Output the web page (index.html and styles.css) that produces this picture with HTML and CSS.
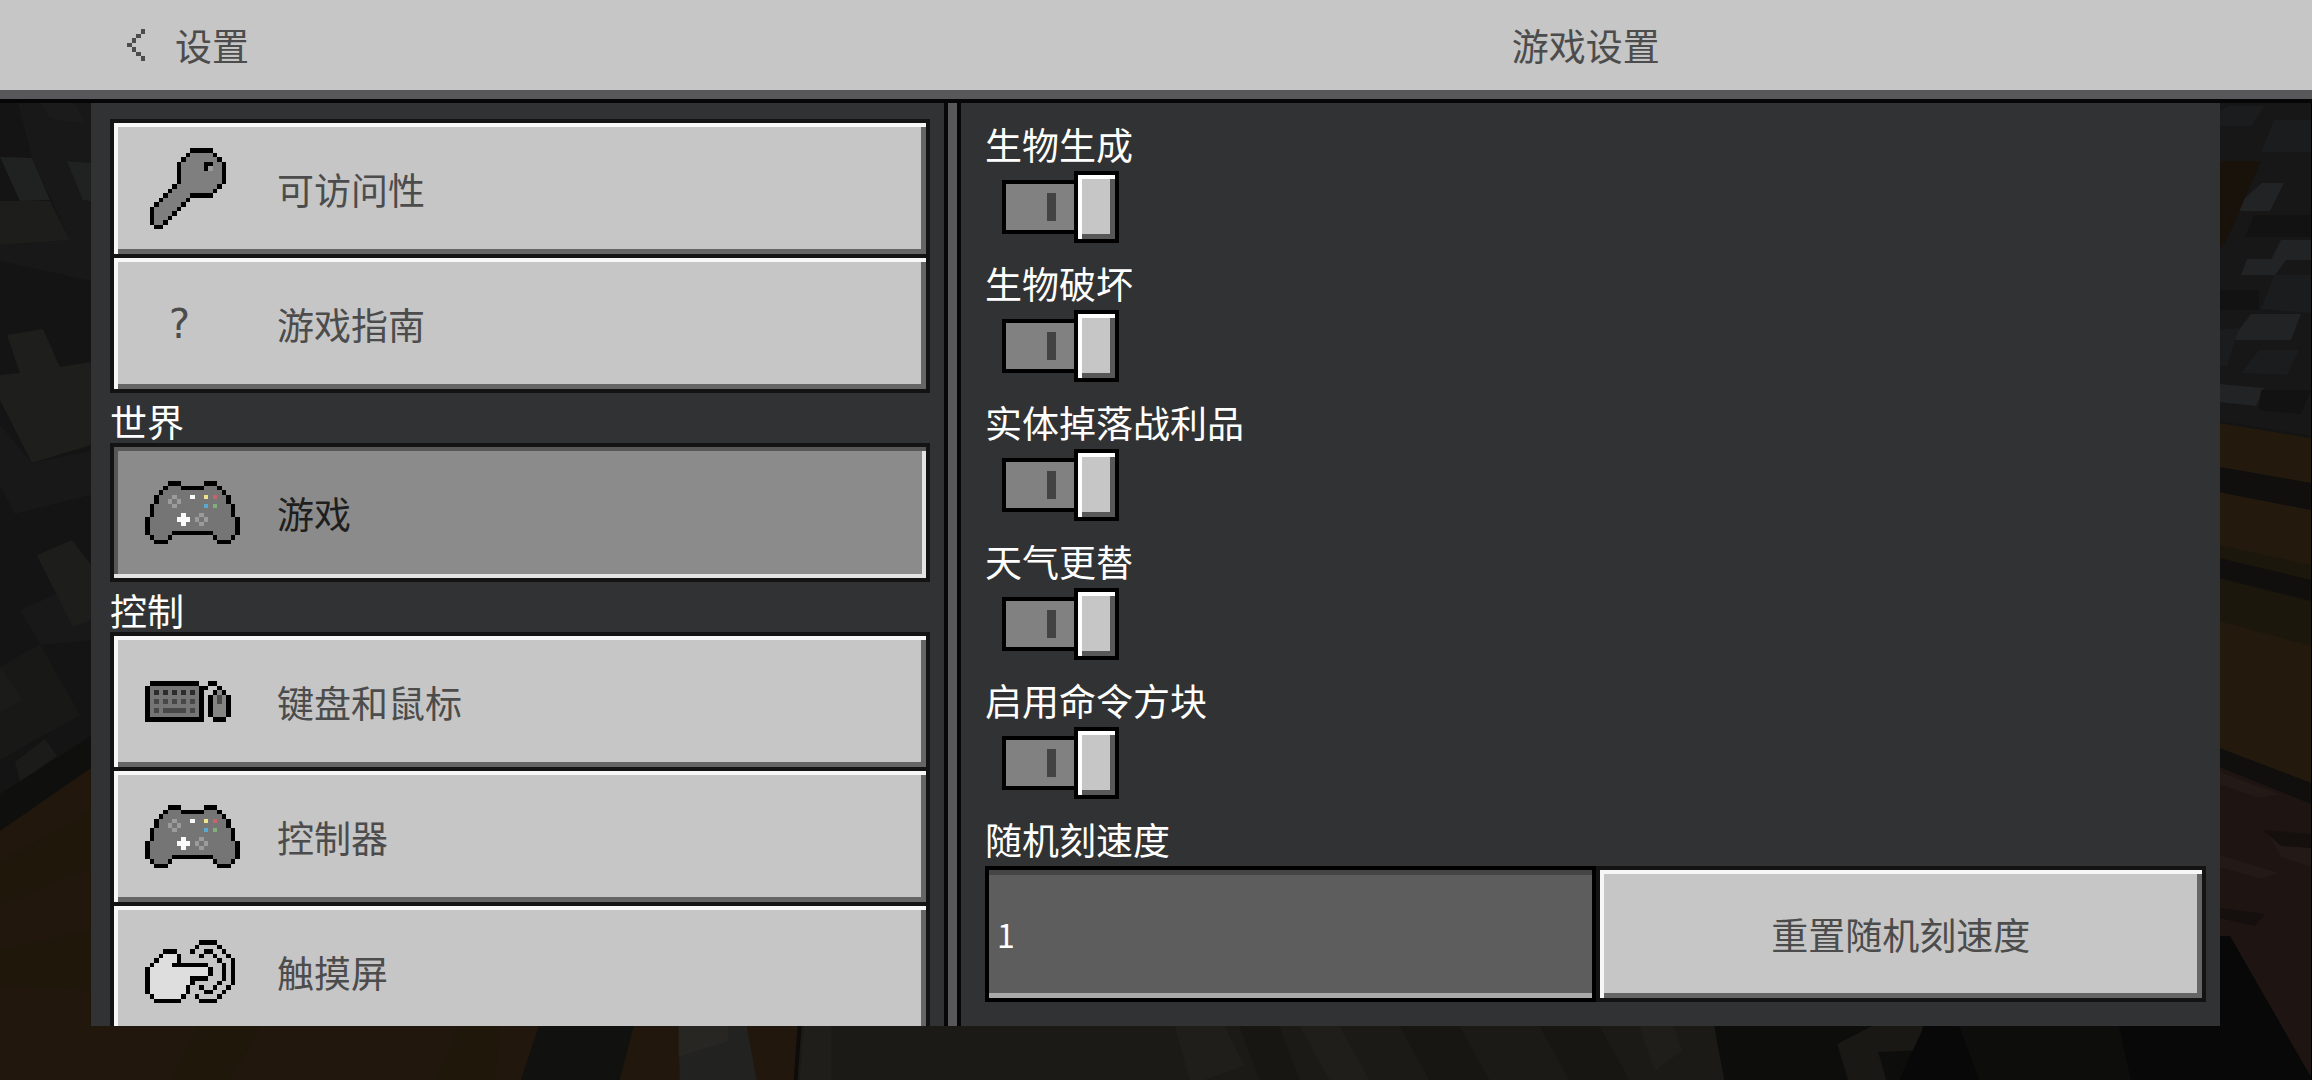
FILE: index.html
```
<!DOCTYPE html>
<html lang="zh-CN">

<head>
	<meta charset="UTF-8">
	<title>游戏设置</title>
	<link rel="stylesheet" href="styles.css">
</head>

<body>
	<svg class="scene" viewBox="0 0 2312 1080" preserveAspectRatio="none" aria-hidden="true">
		<!-- stone wall, left -->
		<rect width="2312" height="1080" fill="#141414" />
		<path fill="#181818" d="M18 103h73v60l-24-2 24 40v80l-91-20V245l70-5-38-82z" />
		<path fill="#202121" d="M0 157l32 1 18 42-30 1zM67 161l24 2v38l-8-1z" />
		<path fill="#1b1b1b" d="M40 103h35l10 20-34-4z" />
		<path fill="#1d1d1b" d="M0 201h50l20 39-70 5z" />
		<path fill="#1e1e1c" d="M7 335l36-6 17 38 31-5v83l-59 18L0 400v-25l20-2z" />
		<path fill="#181818" d="M0 425l32 38 59-12v44l-76 19-15-28zM20 610l50-22 21 30v22l-50 5z" />
		<path fill="#1d1d1c" d="M37 555l35-15 19 25v55l-18 7z" />
		<path fill="#181817" d="M0 667l40-23 40 71-80 45z" />
		<path fill="#1b1b1a" d="M0 667l23 33-23 12zM15 762l30-23 12 17-37 26z" />
		<path fill="#0f0f0e" d="M0 794l91-58v32L0 831z" />
		<!-- planks, left and bottom -->
		<path fill="#21170c" d="M0 831l91-63v258h709v54H0z" />
		<path fill="#1e170a" d="M0 862l91-50v55L0 905zM0 950l91-20v60L0 985zM500 1026h-40l-25 54h60zM200 1026h60l-30 54h-60z" />
		<path fill="#11110f" d="M539 1026h95l-14 54h-99z" />
		<path fill="#222221" d="M679 1026h68l10 54h-77z" />
		<path fill="#272623" d="M679 1026h50v15l-50 16z" />
		<path fill="#0d0c0a" d="M798 1026h4l-4 54h-4z" />
		<!-- floor -->
		<path fill="#1b1a16" d="M802 1026h930v54H798z" />
		<path fill="#1f1e1a" d="M804 1026h28v54h-32zM1175 1026h50l20 40-40 14h-15zM1300 1026h40l30 54h-40zM1640 1026h35l8 25-28 20z" />
		<path fill="#171613" d="M1240 1026h40l20 54h-40zM1400 1026h60l30 54h-60zM1540 1026h60l30 54h-60z" />
		<path fill="#0d0d0b" d="M1715 1026h600v54h-590z" />
		<path fill="#1a1814" d="M1838 1044l35-18h50l4 24-48 2 8 28h-38z" />
		<path fill="#080808" d="M1925 1026h35l20 54h-80zM2120 1026h192v54h-180z" />
		<!-- right side wall -->
		<path fill="#171718" d="M2220 103h92v333l-92-15z" />
		<path fill="#222324" d="M2263 183h22l-14 28h-40zM2248 259h40l-12 16h-34zM2282 240h30v20h-40zM2252 314h50l-10 26h-60zM2220 384l45 4-8 18-37-4z" />
		<path fill="#1b1c1d" d="M2230 106h35l-12 20h-33v-14zM2275 120h37v32h-50zM2275 275h37v38l-50-4zM2220 330l20-2-12 38h-8zM2260 350h40l-12 25-46-2z" />
		<path fill="#121213" d="M2255 215h57v22h-66zM2262 390h50l-10 24-42-4zM2220 290h40v20h-40z" />
		<path fill="#18120a" d="M2220 161h42l-35 81-7 6z" />
		<path fill="#23190c" d="M2220 423l92 15v45l-92-16zM2220 492l92 18v70l-92-22zM2220 578l92 23v182l-92-35z" />
		<path fill="#1c170c" d="M2220 545l92 20v15l-92-22zM2220 578l92 23v45l-92-25z" />
		<path fill="#100f0e" d="M2220 467l92 16v27l-92-18zM2220 558l92 22v21l-92-23zM2220 748l92 35v21l-92-37z" />
		<path fill="#1e1513" d="M2220 767l92 37v276l-81-144h-11z" />
		<path fill="#231916" d="M2220 772l60 22-20 4-40-14zM2220 855l60 18-18 6-42-12zM2270 835l42 8v24l-30-10z" />
		<path fill="#150f0e" d="M2264 830l48 4v14l-30-2zM2222 908l44 6-10 12-36-8z" />
		<path fill="#080808" d="M2220 936h11l81 141v3h-92z" />
	</svg>

	<header class="top-bar">
		<div class="top-left">
			<button type="button" class="back-button"><span class="pixel-icon" data-icon="back"></span>设置</button>
		</div>
		<h1>游戏设置</h1>
	</header>

	<main class="panels">
		<nav class="menu" aria-label="设置">
			<button type="button" class="menu-item"><span class="pixel-icon" data-icon="key"></span>可访问性</button>
			<button type="button" class="menu-item"><span class="pixel-icon question">?</span>游戏指南</button>
			<h2>世界</h2>
			<button type="button" class="menu-item selected" aria-current="page"><span class="pixel-icon" data-icon="gamepad"></span>游戏</button>
			<h2>控制</h2>
			<button type="button" class="menu-item"><span class="pixel-icon" data-icon="keyboard"></span>键盘和鼠标</button>
			<button type="button" class="menu-item"><span class="pixel-icon" data-icon="gamepad"></span>控制器</button>
			<button type="button" class="menu-item"><span class="pixel-icon" data-icon="touch"></span>触摸屏</button>
		</nav>
		<div class="divider"></div>
		<section class="options">
			<div class="option">
				<label for="mob-spawning">生物生成</label>
				<input type="checkbox" class="toggle" id="mob-spawning" checked>
			</div>
			<div class="option">
				<label for="mob-griefing">生物破坏</label>
				<input type="checkbox" class="toggle" id="mob-griefing" checked>
			</div>
			<div class="option">
				<label for="entity-loot">实体掉落战利品</label>
				<input type="checkbox" class="toggle" id="entity-loot" checked>
			</div>
			<div class="option">
				<label for="weather">天气更替</label>
				<input type="checkbox" class="toggle" id="weather" checked>
			</div>
			<div class="option">
				<label for="command-blocks">启用命令方块</label>
				<input type="checkbox" class="toggle" id="command-blocks" checked>
			</div>
			<div class="option">
				<label for="tick-speed">随机刻速度</label>
				<div class="tick-row">
					<input type="text" class="tick-input" id="tick-speed" value="1">
					<button type="button" class="reset-button">重置随机刻速度</button>
				</div>
			</div>
		</section>
	</main>

	<script src="icons.js"></script>
</body>

</html>
```

FILE: styles.css
```
*,
*::before,
*::after {
	box-sizing: border-box;
}

body {
	margin: 0;
	height: 100vh;
	display: flex;
	flex-direction: column;
	overflow: hidden;
	background: #141414;
	color: #ffffff;
	font-family: "Noto Sans CJK SC", sans-serif;
	font-size: 37px;
	line-height: 40px;
}

button,
input {
	font: inherit;
	margin: 0;
	border-radius: 0;
}

h1,
h2 {
	margin: 0;
	font-size: 37px;
	font-weight: normal;
}

.scene {
	position: absolute;
	top: 0;
	left: 0;
	width: 100%;
	height: 100%;
	z-index: -1;
	border-right: 1px solid #000000;
}

/* top bar */
.top-bar {
	display: grid;
	grid-template-columns: 19fr 28fr;
	column-gap: 9px;
	align-items: center;
	height: 103px;
	padding: 0 96px 0 91px;
	background: #c6c6c6;
	border-bottom: 4px solid #060606;
	box-shadow: inset 0 -9px #58585a;
	color: #4c4c4c;
	flex-shrink: 0;
}

.top-bar h1 {
	text-align: center;
	padding-bottom: 9px;
}

.top-left {
	padding: 0 0 9px 36px;
}

.back-button {
	display: flex;
	align-items: center;
	gap: 30px;
	padding: 0;
	border: none;
	background: none;
	color: inherit;
	cursor: pointer;
}

/* panels */
.panels {
	display: grid;
	grid-template-columns: 19fr 9px 28fr;
	flex: 1;
	min-height: 0;
	margin: 0 92px 54px 91px;
}

.menu,
.options {
	background: #313233;
	overflow-y: auto;
	scrollbar-width: none;
}

.menu {
	padding: 16px 14px 0 19px;
	border-right: 4px solid #060606;
}

.divider {
	background: #58585a;
}

.options {
	padding: 21px 14px 0 24px;
	border-left: 4px solid #060606;
}

.menu h2 {
	padding: 8px 0 2px;
}

.menu-item,
.reset-button {
	border: 4px solid #131313;
	background: #c6c6c6;
	box-shadow: inset 0 4px #f7f7f7, inset 4px 0 #f7f7f7, inset 0 -5px #656565, inset -5px 0 #656565;
	color: #4c4c4c;
	cursor: pointer;
}

.menu-item {
	display: flex;
	align-items: center;
	width: 100%;
	height: 139px;
	padding: 0 31px;
	text-align: left;
}

.menu-item + .menu-item {
	margin-top: -4px;
}

.menu-item .pixel-icon {
	width: 132px;
}

.menu-item.selected {
	background: #8b8b8b;
	box-shadow: inset 0 4px #575757, inset 0 -4px #e3e3e3, inset -4px 0 #e3e3e3, inset 4px 0 #575757;
	color: #1e1e1e;
}

.pixel-icon svg {
	display: block;
}

.question {
	padding-left: 22px;
	font-family: "DejaVu Sans Mono", monospace;
	font-size: 40px;
}

/* options */
.option {
	margin-bottom: 20px;
}

.option label {
	display: block;
	margin-bottom: 7px;
}

.toggle {
	appearance: none;
	display: flex;
	align-items: center;
	width: 117px;
	height: 72px;
	margin-left: 17px;
	cursor: pointer;
}

.toggle::before {
	content: "";
	width: 76px;
	height: 54px;
	border: 4px solid #000000;
	background: linear-gradient(#434343, #434343) 41px 9px / 9px 28px no-repeat #818181;
}

.toggle::after {
	content: "";
	width: 45px;
	height: 72px;
	margin-left: -4px;
	border: 4px solid #000000;
	background: #c6c6c6;
	box-shadow: inset 0 4px #ffffff, inset 4px 0 #ffffff, inset 0 -5px #585858, inset -5px 0 #585858;
}

.toggle:not(:checked) {
	flex-direction: row-reverse;
}

.tick-row {
	display: flex;
}

.tick-input,
.reset-button {
	width: 50%;
	height: 136px;
}

.tick-input {
	padding: 0 8px;
	border: 4px solid #000000;
	background: #5d5d5d;
	box-shadow: inset 0 5px #454545, inset 0 -5px #a9a9a9;
	color: #ffffff;
	font-size: 32px;
}
```

FILE: icons.js
```
const colors = {
	'#': '#000000',
	a: '#4c4c4c',
	g: '#757575',
	l: '#9b9b9b',
	W: '#fafafa',
	Y: '#eee28c',
	R: '#c9636b',
	B: '#59a9cf',
	G: '#82ae7b',
	h: '#7f7f7f',
	k: '#2c2c2c',
	j: '#474747',
	m: '#858583',
	d: '#4a4a4a',
	w: '#dedede',
};

const icons = {
	back: [
		'...a',
		'..a.',
		'.a..',
		'a...',
		'.a..',
		'..a.',
		'...a',
	],
	key: [
		'..........#####...',
		'.........#hhhhh#..',
		'........#hhhhhhh#.',
		'.......#hhhhh##hh#',
		'.......#hhhhh#lhh#',
		'.......#hhhhhhhhh#',
		'.......#hhhhhhhhh#',
		'.......#hhhhhhhhh#',
		'......#hhhhhhhhh#.',
		'.....#hhhhhhhhh#..',
		'....#hhhhh#####...',
		'...#hhhhh#........',
		'..#hhhhh#.........',
		'.#hhhhh#..........',
		'.#hhhh#...........',
		'.#hhh#............',
		'.#hh#.............',
		'..##..............',
	],
	gamepad: [
		'.....###.....###.....',
		'....#ggg#####ggg#....',
		'...#ggggggggggggg#...',
		'..#ggglgggWggYgRgg#..',
		'..#gglglgggggggggg#..',
		'.#gggglggggggBgGggg#.',
		'.#ggggggggggggggggg#.',
		'.#ggggggWggglgggggg#.',
		'#ggggggWWWglglgggggg#',
		'#gggggggWggglggggggg#',
		'#ggggggggggggggggggg#',
		'#ggggg#########ggggg#',
		'.#ggg#.........#ggg#.',
		'..###...........###..',
	],
	keyboard: [
		'.###########..##...',
		'#ggggggggggg##..#..',
		'#gkgkgkgkgkg#..#m#.',
		'#ggggggggggg#.#mdm#',
		'#gjgjgjgjgjg#.#mdm#',
		'#ggggggggggg#.#mmm#',
		'#gjgjjjjjgjg#.#mmm#',
		'#ggggggggggg#.#mmm#',
		'#############..###.',
	],
	touch: [
		'............####....',
		'...........#....#...',
		'....###...#..##..#..',
		'...#www#....#..#..#.',
		'..#wwww#........#..#',
		'.#wwww########...#.#',
		'#wwwwwwwwwwwww#..#.#',
		'#wwwwwwwwwwwww#..#.#',
		'#wwwwwwwww####...#.#',
		'#wwwwwwwww#.....#..#',
		'#wwwwwwww#..#..#..#.',
		'#wwwwwwww#...##..#..',
		'.#wwwwww#..#....#...',
		'..######....####....',
	],
};

// one icon pixel covers 4.5 screen pixels
function drawIcon(rows) {
	const width = rows[0].length;
	const height = rows.length;
	let rects = '';
	rows.forEach((row, y) => {
		[...row].forEach((c, x) => {
			if (c !== '.') {
				rects += `<rect x="${x}" y="${y}" width="1" height="1" fill="${colors[c]}"/>`;
			}
		});
	});
	return `<svg width="${Math.round(width * 4.5)}" height="${Math.round(height * 4.5)}" viewBox="0 0 ${width} ${height}" shape-rendering="crispEdges" aria-hidden="true">${rects}</svg>`;
}

document.querySelectorAll('[data-icon]').forEach(el => {
	el.innerHTML = drawIcon(icons[el.dataset.icon]);
});
```
